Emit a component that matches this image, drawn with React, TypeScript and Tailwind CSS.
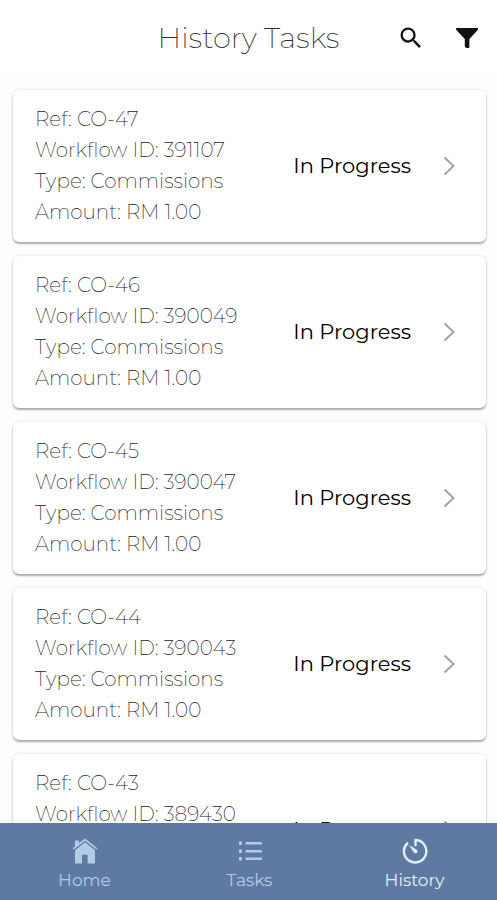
import { clsx } from "clsx";

const tasks = [
  { ref: "CO-47", workflowId: "391107", type: "Commissions", amount: "RM 1.00", status: "In Progress" },
  { ref: "CO-46", workflowId: "390049", type: "Commissions", amount: "RM 1.00", status: "In Progress" },
  { ref: "CO-45", workflowId: "390047", type: "Commissions", amount: "RM 1.00", status: "In Progress" },
  { ref: "CO-44", workflowId: "390043", type: "Commissions", amount: "RM 1.00", status: "In Progress" },
  { ref: "CO-43", workflowId: "389430", type: "Commissions", amount: "RM 1.00", status: "In Progress" },
];

type Task = (typeof tasks)[number];

function SearchIcon() {
  return (
    <svg viewBox="0 0 24 24" className="size-7" fill="currentColor" aria-hidden="true">
      <path d="M15.5 14h-.79l-.28-.27A6.47 6.47 0 0 0 16 9.5 6.5 6.5 0 1 0 9.5 16c1.61 0 3.09-.59 4.23-1.57l.27.28v.79l5 4.99L20.49 19l-4.99-5zm-6 0C7.01 14 5 11.99 5 9.5S7.01 5 9.5 5 14 7.01 14 9.5 11.99 14 9.5 14z" />
    </svg>
  );
}

function FilterIcon() {
  return (
    <svg viewBox="0 0 24 24" className="size-6" fill="currentColor" aria-hidden="true">
      <path d="M1.6 2h20.8q1 0 .6 1-.3.9-1.2 1.9L14.4 13v8.200q0 .8-.8.8h-2q-.8 0-1.200-.7l-.6-1V13L2.200 4.900Q1.300 4 1 3q-.3-1 .6-1z" />
    </svg>
  );
}

function HomeIcon() {
  return (
    <svg viewBox="0 0 26 26" className="size-[26px]" fill="currentColor" aria-hidden="true">
      <path d="M13 .4 7 5V2.500H3v5.800L.6 10.200l1.100 1.400L13 2.700l11.300 8.900 1.100-1.400z" />
      <path d="M13 4.300 3 12.200V25q0 .6.600.6H10v-8.800h5.600v8.800h6.800q.6 0 .6-.6V12.200z" />
    </svg>
  );
}

function ListIcon() {
  return (
    <svg viewBox="0 0 26 26" className="size-[26px]" fill="currentColor" aria-hidden="true">
      <path d="M2 3.500h3v3.500H2zM2 11.500h3v3.500H2zM2 19h3v3.500H2zM8.500 4H25v2.500H8.500zM8.500 12H25v2.500H8.500zM8.500 19.500H25V22H8.500z" />
    </svg>
  );
}

function TimerIcon() {
  return (
    <svg viewBox="0 0 26 26" className="size-[26px]" fill="none" stroke="currentColor" strokeWidth="2.4" aria-hidden="true">
      <path d="M13.500 7V2A11.200 11.200 0 1 1 5.200 5.300" strokeLinecap="round" strokeLinejoin="round" />
      <path d="M7 7 14.800 11.800Q16.200 13.500 15 14.900 13.500 16 11.900 14.600z" fill="currentColor" stroke="none" />
    </svg>
  );
}

const tabs = [
  { label: "Home", Icon: HomeIcon },
  { label: "Tasks", Icon: ListIcon },
  { label: "History", Icon: TimerIcon },
];

function TaskCard({ task }: { task: Task }) {
  return (
    <a
      href={`#${task.ref}`}
      className="flex items-center rounded-md bg-white py-3.5 pl-[22px] pr-[31px] shadow-[0_2px_2px_rgba(0,0,0,0.3),0_0_3px_rgba(0,0,0,0.12)]"
    >
      <div className="min-w-0 flex-1 text-xl/[31px] font-extralight text-[#1c1c1c]">
        <p>Ref: {task.ref}</p>
        <p>Workflow ID: {task.workflowId}</p>
        <p>Type: {task.type}</p>
        <p>Amount: {task.amount}</p>
      </div>
      <span className="shrink-0 text-[21px] text-black">{task.status}</span>
      <svg viewBox="0 0 12 20" className="ml-8 h-5 w-3 shrink-0" fill="none" stroke="#a3a3a3" strokeWidth="2" aria-hidden="true">
        <path d="M1.500 1.500 10.500 10 1.500 18.500" />
      </svg>
    </a>
  );
}

export default function App() {
  return (
    <div className="flex h-screen flex-col bg-white font-['Montserrat','Inter',sans-serif]">
      <header className="grid h-[76px] shrink-0 grid-cols-[1fr_auto_1fr] items-center px-[18px]">
        <h1 className="col-start-2 text-[29px] font-extralight text-[#303030]">History Tasks</h1>
        <div className="flex items-center justify-end gap-[30px] text-[#111]">
          <button type="button" aria-label="Search">
            <SearchIcon />
          </button>
          <button type="button" aria-label="Filter">
            <FilterIcon />
          </button>
        </div>
      </header>

      <main className="flex min-h-0 flex-1 flex-col gap-3.5 overflow-y-auto bg-[#fdfdfd] pl-[13px] pr-[11px] pt-3.5 [scrollbar-width:none]">
        {tasks.map((task) => (
          <TaskCard key={task.ref} task={task} />
        ))}
      </main>

      <nav className="grid h-[77px] shrink-0 grid-cols-3 bg-[#5e7aa2] pl-0.5 pt-1.5">
        {tabs.map(({ label, Icon }) => (
          <button
            key={label}
            type="button"
            className={clsx(
              "flex flex-col items-center justify-center gap-1 text-[17px]/6",
              label === "History" ? "text-[#e4f1fb]" : "text-[#b4cbe8]",
            )}
          >
            <Icon />
            {label}
          </button>
        ))}
      </nav>
    </div>
  );
}
